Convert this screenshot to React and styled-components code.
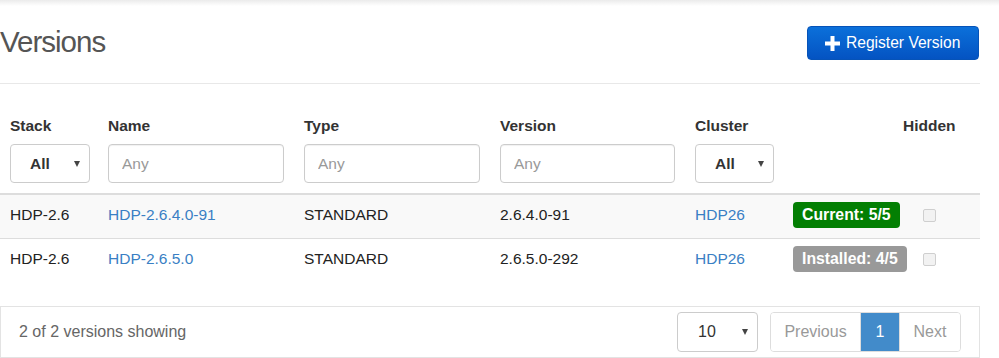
import React from 'react';
import styled, { createGlobalStyle } from 'styled-components';

const GlobalStyle = createGlobalStyle`
  body {
    margin: 0;
    background: #fff;
    color: #333;
    font-family: "Liberation Sans", Arial, sans-serif;
    font-size: 15.5px;
  }
`;

const TopShade = styled.div`
  height: 6px;
  background: linear-gradient(#ebebeb, #fff);
`;

const Page = styled.div`
  width: 980px;
`;

const Header = styled.div`
  display: flex;
  justify-content: space-between;
  align-items: flex-start;
  height: 77px;
  border-bottom: 1px solid #e8e8e8;
`;

const Title = styled.h1`
  margin: 19px 0 0;
  font-size: 29.5px;
  line-height: 34px;
  font-weight: 400;
  letter-spacing: -1px;
  color: #555;
`;

const PrimaryButton = styled.button`
  display: flex;
  align-items: center;
  gap: 6px;
  margin-top: 20px;
  margin-right: 1px;
  height: 34px;
  width: 172px;
  padding: 0 0 0 17px;
  border: 1px solid #0653b8;
  border-radius: 4px;
  background: linear-gradient(#0b70da, #0453c2);
  color: #fff;
  font-family: inherit;
  font-size: 15.6px;
  cursor: pointer;
`;

const Table = styled.table`
  width: 980px;
  border-collapse: separate;
  border-spacing: 0;
  table-layout: fixed;
`;

const HeadCell = styled.th`
  padding: 32px 10px 10px;
  text-align: left;
  vertical-align: top;
  border-bottom: 2px solid #ddd;
`;

const HeadLabel = styled.div`
  font-weight: 700;
  line-height: 20px;
  margin-bottom: 8px;
  color: #333;
`;

const FilterInput = styled.input`
  box-sizing: border-box;
  width: 100%;
  height: 39px;
  padding: 0 13px;
  border: 1px solid #ccc;
  border-radius: 4px;
  box-shadow: inset 0 1px 1px rgba(0, 0, 0, 0.06);
  font-family: inherit;
  font-size: 15.5px;
  color: #555;
  &::placeholder {
    color: #999;
  }
`;

const SelectBox = styled.div`
  box-sizing: border-box;
  display: flex;
  align-items: center;
  justify-content: space-between;
  width: ${p => p.$width}px;
  height: ${p => p.$height || 39}px;
  padding: 0 9px 0 ${p => p.$padLeft || 19}px;
  border: 1px solid #ccc;
  border-radius: 4px;
  background: #fff;
  font-weight: ${p => (p.$bold ? 700 : 400)};
  font-size: ${p => (p.$bold ? '15.5px' : '16px')};
  color: #333;
`;

const Caret = styled.span`
  width: 0;
  height: 0;
  border-left: 3.5px solid transparent;
  border-right: 3.5px solid transparent;
  border-top: 6px solid #444;
  margin-top: 1px;
`;

const Row = styled.tr`
  background: ${p => (p.$striped ? '#f9f9f9' : '#fff')};
`;

const Cell = styled.td`
  padding: 7px 10px 10px;
  height: 26px;
  vertical-align: middle;
  color: #222;
  border-top: ${p => (p.$divided ? '1px solid #ddd' : 'none')};
  white-space: nowrap;
`;

const Link = styled.a`
  color: #3a7fc4;
  text-decoration: none;
`;

const Badge = styled.span`
  display: inline-flex;
  align-items: center;
  height: 26px;
  padding: 0 9px;
  border-radius: 4px;
  background: ${p => p.$color};
  color: #fff;
  font-weight: 700;
  font-size: 15.8px;
`;

const CheckBox = styled.span`
  display: block;
  box-sizing: border-box;
  width: 13px;
  height: 13px;
  margin-left: 20px;
  border: 1px solid #cfcfcf;
  border-radius: 2px;
  background: #f2f2f2;
`;

const Footer = styled.div`
  display: flex;
  align-items: center;
  justify-content: space-between;
  box-sizing: border-box;
  width: 980px;
  height: 52px;
  margin-top: 24px;
  padding: 0 18px 1px 18px;
  border: 1px solid #e3e3e3;
`;

const Summary = styled.span`
  font-size: 16px;
  color: #666;
`;

const Controls = styled.div`
  display: flex;
  align-items: center;
  gap: 12px;
`;

const Pager = styled.div`
  display: flex;
  height: 40px;
  border: 1px solid #ddd;
  border-radius: 4px;
  overflow: hidden;
  box-sizing: border-box;
`;

const PageItem = styled.span`
  box-sizing: border-box;
  display: flex;
  align-items: center;
  justify-content: center;
  width: ${p => p.$width}px;
  font-size: 16px;
  color: ${p => (p.$active ? '#fff' : '#999')};
  background: ${p => (p.$active ? '#428bca' : '#fff')};
  & + & {
    border-left: 1px solid #ddd;
  }
`;

function PlusIcon() {
  return (
    <svg width="15" height="15" viewBox="0 0 15 15" fill="#fff">
      <path d="M5.5 0h4v5.5H15v4H9.5V15h-4V9.5H0v-4h5.5z" />
    </svg>
  );
}

const versions = [
  { stack: 'HDP-2.6', name: 'HDP-2.6.4.0-91', type: 'STANDARD', version: '2.6.4.0-91', cluster: 'HDP26', status: 'Current: 5/5', color: '#037f03' },
  { stack: 'HDP-2.6', name: 'HDP-2.6.5.0', type: 'STANDARD', version: '2.6.5.0-292', cluster: 'HDP26', status: 'Installed: 4/5', color: '#999' }
];

export default function App() {
  return (
    <>
      <GlobalStyle />
      <TopShade />
      <Page>
        <Header>
          <Title>Versions</Title>
          <PrimaryButton>
            <PlusIcon />
            Register Version
          </PrimaryButton>
        </Header>
        <Table>
          <colgroup>
            <col style={{ width: 98 }} />
            <col style={{ width: 196 }} />
            <col style={{ width: 196 }} />
            <col style={{ width: 195 }} />
            <col style={{ width: 98 }} />
            <col style={{ width: 110 }} />
            <col style={{ width: 87 }} />
          </colgroup>
          <thead>
            <tr>
              <HeadCell>
                <HeadLabel>Stack</HeadLabel>
                <SelectBox $width={80} $bold>All<Caret /></SelectBox>
              </HeadCell>
              <HeadCell>
                <HeadLabel>Name</HeadLabel>
                <FilterInput placeholder="Any" />
              </HeadCell>
              <HeadCell>
                <HeadLabel>Type</HeadLabel>
                <FilterInput placeholder="Any" />
              </HeadCell>
              <HeadCell>
                <HeadLabel>Version</HeadLabel>
                <FilterInput placeholder="Any" />
              </HeadCell>
              <HeadCell>
                <HeadLabel>Cluster</HeadLabel>
                <SelectBox $width={79} $bold>All<Caret /></SelectBox>
              </HeadCell>
              <HeadCell />
              <HeadCell>
                <HeadLabel>Hidden</HeadLabel>
              </HeadCell>
            </tr>
          </thead>
          <tbody>
            {versions.map((v, i) => (
              <Row key={v.name} $striped={i % 2 === 0}>
                <Cell $divided={i > 0}>{v.stack}</Cell>
                <Cell $divided={i > 0}><Link href="#">{v.name}</Link></Cell>
                <Cell $divided={i > 0}>{v.type}</Cell>
                <Cell $divided={i > 0}>{v.version}</Cell>
                <Cell $divided={i > 0}><Link href="#">{v.cluster}</Link></Cell>
                <Cell $divided={i > 0}><Badge $color={v.color}>{v.status}</Badge></Cell>
                <Cell $divided={i > 0}><CheckBox /></Cell>
              </Row>
            ))}
          </tbody>
        </Table>
        <Footer>
          <Summary>2 of 2 versions showing</Summary>
          <Controls>
            <SelectBox $width={81} $height={40} $padLeft={20} $bold={false}>10<Caret /></SelectBox>
            <Pager>
              <PageItem $width={89}>Previous</PageItem>
              <PageItem $width={39} $active>1</PageItem>
              <PageItem $width={61}>Next</PageItem>
            </Pager>
          </Controls>
        </Footer>
      </Page>
    </>
  );
}
